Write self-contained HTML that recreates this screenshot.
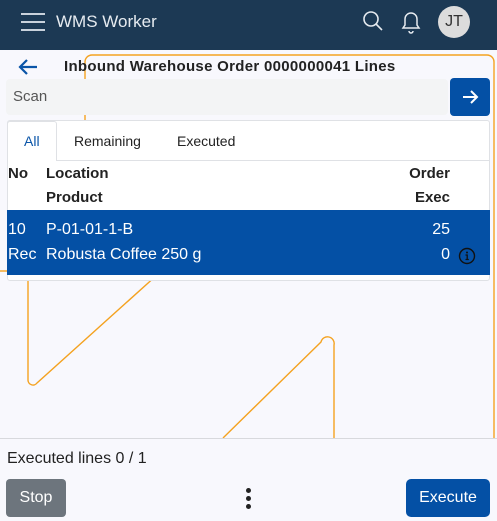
<!DOCTYPE html>
<html><head><style>
*{margin:0;padding:0;box-sizing:border-box}
body{width:497px;height:521px;overflow:hidden;background:#f8f8fd;font-family:"Liberation Sans",sans-serif;position:relative;color:#222}
.hdr{position:absolute;left:0;top:0;width:497px;height:50px;background:#1c3954}
.abs{position:absolute}
</style></head><body>
<div class="hdr">
 <div class="abs" style="left:21px;top:13px;width:24px;height:2px;background:#c9d2dc"></div>
 <div class="abs" style="left:21px;top:21px;width:24px;height:2px;background:#c9d2dc"></div>
 <div class="abs" style="left:21px;top:29px;width:24px;height:2px;background:#c9d2dc"></div>
 <div class="abs" style="left:56px;top:12px;color:#e6ebf0;font-size:17px">WMS Worker</div>
 <svg class="abs" style="left:362px;top:10px" width="22" height="22" viewBox="0 0 22 22"><circle cx="9" cy="9" r="7" fill="none" stroke="#e6ebf0" stroke-width="1.6"/><path d="M14 14l6 6" stroke="#e6ebf0" stroke-width="1.6"/></svg>
 <svg class="abs" style="left:399px;top:9px" width="24" height="26" viewBox="0 0 24 26"><path d="M4 19h16l-2-3v-6a6 6 0 0 0-12 0v6z" fill="none" stroke="#e6ebf0" stroke-width="1.5"/><path d="M10 22a2 2 0 0 0 4 0" fill="none" stroke="#e6ebf0" stroke-width="1.5"/></svg>
 <div class="abs" style="left:438px;top:6px;width:32px;height:32px;border-radius:50%;background:#dcdcdc;color:#333;font-size:16px;text-align:center;line-height:32px">JT</div>
</div>
<svg class="abs" style="left:0;top:50px" width="497" height="471">
 <g fill="none" stroke="#f4a220" stroke-width="1.4">
  <path d="M85 72V12a7 7 0 0 1 7-7H487a7 7 0 0 1 7 7V388"/>
  <path d="M28 222V330a5 5 0 0 0 9 3L157 225"/>
  <path d="M0 221H7"/>
  <path d="M223 388L321 292a5 5 0 0 1 13 3V388"/>
 </g>
</svg>
<svg class="abs" style="left:17px;top:57px" width="22" height="20" viewBox="0 0 22 20"><path d="M20 10H3M10 3L3 10l7 7" fill="none" stroke="#0a55a8" stroke-width="2.2"/></svg>
<div class="abs" style="left:64px;top:58px;font-size:15px;font-weight:bold;color:#222;letter-spacing:0.3px">Inbound Warehouse Order 0000000041 Lines</div>
<div class="abs" style="left:6px;top:79px;width:442px;height:36px;background:#f3f4f5;border-radius:4px;color:#555;font-size:15px;padding:9px 7px">Scan</div>
<div class="abs" style="left:450px;top:78px;width:40px;height:38px;background:#0450a5;border-radius:4px"><svg style="position:absolute;left:11px;top:10px" width="18" height="18" viewBox="0 0 18 18"><path d="M2 9h14M10 3l6 6-6 6" fill="none" stroke="#fff" stroke-width="2"/></svg></div>
<div class="abs" style="left:7px;top:120px;width:483px;height:161px;background:#fff;border:1px solid #dfe1e5;border-radius:3px"></div>
<div class="abs" style="left:7px;top:121px;width:50px;height:40px;background:#fff;border:1px solid #dfe1e5;border-bottom:none;border-radius:3px 3px 0 0"></div>
<div class="abs" style="left:7px;top:160px;width:483px;height:1px;background:#dfe1e5"></div>
<div class="abs" style="left:8px;top:160px;width:48px;height:2px;background:#fff"></div>
<div class="abs" style="left:24px;top:133px;font-size:14px;color:#0a55a8">All</div>
<div class="abs" style="left:74px;top:133px;font-size:14px">Remaining</div>
<div class="abs" style="left:177px;top:133px;font-size:14px">Executed</div>
<div class="abs" style="font-weight:bold;font-size:15px;left:8px;top:165px">No</div>
<div class="abs" style="font-weight:bold;font-size:15px;left:46px;top:165px">Location</div>
<div class="abs" style="font-weight:bold;font-size:15px;left:46px;top:189px">Product</div>
<div class="abs" style="font-weight:bold;font-size:15px;right:47px;top:165px">Order</div>
<div class="abs" style="font-weight:bold;font-size:15px;right:47px;top:189px">Exec</div>
<div class="abs" style="left:7px;top:210px;width:483px;height:65px;background:#0450a5;color:#fff;font-size:16px">
 <div class="abs" style="left:1px;top:11px">10</div>
 <div class="abs" style="left:39px;top:11px">P-01-01-1-B</div>
 <div class="abs" style="left:1px;top:36px">Rec</div>
 <div class="abs" style="left:39px;top:36px">Robusta Coffee 250 g</div>
 <div class="abs" style="right:40px;top:11px">25</div>
 <div class="abs" style="right:40px;top:36px">0</div>
 <svg class="abs" style="left:451px;top:37px" width="18" height="18" viewBox="0 0 18 18"><circle cx="9" cy="9" r="7.5" fill="none" stroke="#111" stroke-width="1.4"/><circle cx="9" cy="5.5" r="1" fill="#111"/><path d="M7.5 8h1.7v4.5M7.5 12.5h3.3" fill="none" stroke="#111" stroke-width="1.3"/></svg>
</div>
<div class="abs" style="left:0;top:438px;width:497px;height:1px;background:#d8d9dd"></div>
<div class="abs" style="left:7px;top:450px;font-size:16px;color:#222">Executed lines 0 / 1</div>
<div class="abs" style="left:6px;top:479px;width:60px;height:38px;background:#6d757d;border-radius:4px;color:#fff;font-size:16px;text-align:center;line-height:38px">Stop</div>
<div class="abs" style="left:246px;top:488px;width:5px;height:5px;border-radius:50%;background:#222"></div>
<div class="abs" style="left:246px;top:496px;width:5px;height:5px;border-radius:50%;background:#222"></div>
<div class="abs" style="left:246px;top:504px;width:5px;height:5px;border-radius:50%;background:#222"></div>
<div class="abs" style="left:406px;top:479px;width:84px;height:38px;background:#0450a5;border-radius:5px;color:#fff;font-size:16px;text-align:center;line-height:38px">Execute</div>
</body></html>
